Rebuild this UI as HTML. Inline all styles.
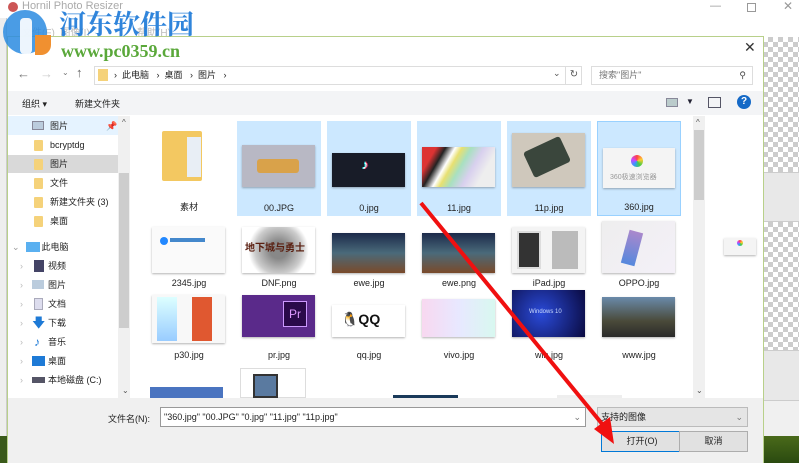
<!DOCTYPE html>
<html><head><meta charset="utf-8"><style>
*{margin:0;padding:0;box-sizing:border-box}
body{width:799px;height:463px;overflow:hidden;background:#fff;font-family:"Liberation Sans","Noto Sans CJK SC",sans-serif;font-size:9px;color:#222;position:relative}
.a{position:absolute}
.chk{background-color:#fff;background-image:linear-gradient(45deg,#ccc 25%,transparent 25%,transparent 75%,#ccc 75%),linear-gradient(45deg,#ccc 25%,transparent 25%,transparent 75%,#ccc 75%);background-size:10px 10px;background-position:0 0,5px 5px}
.nav{position:absolute;left:20px;font-size:9px;color:#222;height:18px;line-height:18px}
.fi{position:absolute;left:14px;top:4px;width:9px;height:11px;background:#f5d27a;border-radius:1px}
.it{position:absolute;width:84px;height:95px}
.it .lb{position:absolute;left:0;right:0;text-align:center;bottom:3px;font-size:9px;color:#222}
.th{position:absolute;box-shadow:0 1px 2px rgba(0,0,0,.3)}
</style></head><body>
<div class="a" style="left:0;top:0;width:799px;height:37px;background:#fff"></div>
<div class="a" style="left:22px;top:0;font-size:11px;color:#aaa">Hornil Photo Resizer</div>
<div class="a" style="left:22px;top:24px;font-size:10px;color:#bbb">文件(F)&nbsp;&nbsp;图像(I)&nbsp;&nbsp;&nbsp;&nbsp;&nbsp;&nbsp;&nbsp;&nbsp;&nbsp;&nbsp;&nbsp;&nbsp;&nbsp;&nbsp;&nbsp;&nbsp;&nbsp;帮助(H)</div>
<div class="a" style="left:8px;top:2px;width:10px;height:10px;border-radius:50%;background:#c55"></div>
<div class="a" style="left:710px;top:0;font-size:11px;color:#999">—</div>
<div class="a" style="left:747px;top:3px;width:9px;height:9px;border:1px solid #999"></div>
<div class="a" style="left:783px;top:-1px;font-size:12px;color:#999">✕</div>
<div class="a" style="left:0;top:18px;width:7px;height:445px;background:#eee;border-right:1px solid #ccc"></div>
<div class="a" style="left:0;top:436px;width:7px;height:27px;background:#3a5a1a"></div>
<div class="a chk" style="left:763px;top:37px;width:36px;height:135px"></div>
<div class="a" style="left:763px;top:172px;width:36px;height:50px;background:#e8e8e8;border-top:1px solid #ccc;border-bottom:1px solid #ccc"></div>
<div class="a chk" style="left:763px;top:222px;width:36px;height:128px"></div>
<div class="a" style="left:763px;top:350px;width:36px;height:50px;background:#e8e8e8;border-top:1px solid #ccc"></div>
<div class="a" style="left:763px;top:400px;width:36px;height:36px;background:#f0f0f0;border-top:1px solid #ccc"></div>
<div class="a" style="left:763px;top:436px;width:36px;height:27px;background:linear-gradient(#4a6a1a,#2a4a10)"></div>
<div class="a" style="left:7px;top:36px;width:757px;height:427px;background:#fff;border:1px solid #b8d08a"></div>
<div class="a" style="left:744px;top:39px;font-size:14px;color:#333">✕</div>
<div class="a" style="left:17px;top:66px;font-size:13px;color:#777">←</div>
<div class="a" style="left:40px;top:66px;font-size:13px;color:#ccc">→</div>
<div class="a" style="left:62px;top:68px;font-size:8px;color:#777">⌄</div>
<div class="a" style="left:76px;top:65px;font-size:13px;color:#666">↑</div>
<div class="a" style="left:94px;top:66px;width:488px;height:19px;border:1px solid #ddd"></div>
<div class="a" style="left:98px;top:69px;width:10px;height:12px;background:#f5d27a"></div>
<div class="a" style="left:114px;top:68px;font-size:9px;color:#222">›&nbsp;&nbsp;此电脑&nbsp;&nbsp;&nbsp;›&nbsp;&nbsp;桌面&nbsp;&nbsp;&nbsp;›&nbsp;&nbsp;图片&nbsp;&nbsp;&nbsp;›</div>
<div class="a" style="left:553px;top:68px;font-size:9px;color:#555">⌄</div>
<div class="a" style="left:565px;top:66px;width:17px;height:19px;border-left:1px solid #ddd;font-size:10px;color:#555;text-align:center;line-height:18px">↻</div>
<div class="a" style="left:591px;top:66px;width:162px;height:19px;border:1px solid #ddd;font-size:9px;color:#777;line-height:17px;padding-left:7px">搜索"图片"<span style="position:absolute;right:6px;color:#444">⚲</span></div>
<div class="a" style="left:8px;top:91px;width:755px;height:24px;background:#f3f4f6"></div>
<div class="a" style="left:22px;top:97px;font-size:9px">组织 ▾</div>
<div class="a" style="left:75px;top:97px;font-size:9px">新建文件夹</div>
<div class="a" style="left:666px;top:98px;width:12px;height:9px;background:#bcc;border:1px solid #889"></div>
<div class="a" style="left:686px;top:97px;font-size:8px;color:#223">▼</div>
<div class="a" style="left:708px;top:97px;width:13px;height:11px;border:1px solid #556"></div>
<div class="a" style="left:737px;top:95px;width:14px;height:14px;border-radius:50%;background:#1469c7;color:#fff;font-weight:bold;font-size:10px;text-align:center;line-height:14px">?</div>
<div class="a" style="left:8px;top:116px;width:110px;height:282px;background:#fff"></div>
<div class="a" style="left:8px;top:116px;width:110px;height:19px;background:#e5f3ff"></div>
<div class="a" style="left:8px;top:155px;width:110px;height:18px;background:#d9d9d9"></div>
<div class="a" style="left:118px;top:116px;width:12px;height:282px;background:#f0f0f0"></div>
<div class="a" style="left:119px;top:173px;width:10px;height:155px;background:#cdcdcd"></div>
<div class="a" style="left:122px;top:118px;font-size:8px;color:#555">^</div>
<div class="a" style="left:122px;top:386px;font-size:8px;color:#555">⌄</div>
<div class="nav" style="top:117px;left:32px"><span class="a" style="left:0;top:4px;width:12px;height:9px;background:#bcd;border:1px solid #889"></span><span style="margin-left:18px">图片</span><span style="margin-left:38px;color:#aaa">📌</span></div>
<div class="nav" style="top:136px;left:20px"><span class="fi"></span><span style="margin-left:30px">bcryptdg</span></div>
<div class="nav" style="top:155px;left:20px"><span class="fi"></span><span style="margin-left:30px">图片</span></div>
<div class="nav" style="top:174px;left:20px"><span class="fi"></span><span style="margin-left:30px">文件</span></div>
<div class="nav" style="top:193px;left:20px"><span class="fi"></span><span style="margin-left:30px">新建文件夹 (3)</span></div>
<div class="nav" style="top:212px;left:20px"><span class="fi"></span><span style="margin-left:30px">桌面</span></div>
<div class="nav" style="top:238px;left:12px"><span style="color:#999">⌄</span><span class="a" style="left:14px;top:4px;width:14px;height:10px;background:#5ab0f0"></span><span style="margin-left:22px">此电脑</span></div>
<div class="nav" style="top:257px;left:20px"><span style="color:#bbb">›</span><span class="a" style="left:14px;top:3px;width:10px;height:12px;background:#446"></span><span style="margin-left:25px">视频</span></div>
<div class="nav" style="top:276px;left:20px"><span style="color:#bbb">›</span><span class="a" style="left:12px;top:4px;width:12px;height:9px;background:#bcd"></span><span style="margin-left:25px">图片</span></div>
<div class="nav" style="top:295px;left:20px"><span style="color:#bbb">›</span><span class="a" style="left:14px;top:3px;width:9px;height:12px;background:#dde;border:1px solid #aab"></span><span style="margin-left:25px">文档</span></div>
<div class="nav" style="top:314px;left:20px"><span style="color:#bbb">›</span><span class="a" style="left:12px;top:0;color:#1e7ad6;font-size:13px">🡇</span><span style="margin-left:25px">下载</span></div>
<div class="nav" style="top:333px;left:20px"><span style="color:#bbb">›</span><span class="a" style="left:14px;top:0;color:#1e7ad6;font-size:12px">♪</span><span style="margin-left:25px">音乐</span></div>
<div class="nav" style="top:352px;left:20px"><span style="color:#bbb">›</span><span class="a" style="left:12px;top:4px;width:13px;height:10px;background:#1e7ad6"></span><span style="margin-left:25px">桌面</span></div>
<div class="nav" style="top:371px;left:20px"><span style="color:#bbb">›</span><span class="a" style="left:12px;top:6px;width:13px;height:6px;background:#556"></span><span style="margin-left:25px">本地磁盘 (C:)</span></div>
<div class="a" style="left:693px;top:116px;width:12px;height:282px;background:#f0f0f0"></div>
<div class="a" style="left:694px;top:130px;width:10px;height:70px;background:#cdcdcd"></div>
<div class="a" style="left:696px;top:118px;font-size:8px;color:#555">^</div>
<div class="a" style="left:696px;top:386px;font-size:8px;color:#555">⌄</div>
<!-- row1 -->
<div class="it" style="left:147px;top:121px"><div class="th" style="left:15px;top:10px;width:40px;height:50px;background:#f3c861;box-shadow:none;border-radius:2px"></div><div class="a" style="left:40px;top:16px;width:14px;height:40px;background:#e8eef5"></div><div class="lb">素材</div></div>
<div class="it" style="left:237px;top:121px;background:#cce8ff"><div class="th" style="left:5px;top:24px;width:73px;height:42px;background:#b8b8c4"></div><div class="a" style="left:20px;top:38px;width:42px;height:14px;background:#d9a24a;border-radius:3px"></div><div class="lb">00.JPG</div></div>
<div class="it" style="left:327px;top:121px;background:#cce8ff"><div class="th" style="left:5px;top:32px;width:73px;height:34px;background:#181c28"></div><div class="a" style="left:35px;top:36px;color:#fff;font-size:13px;text-shadow:-1px 0 #2ee,1px 0 #f25">♪</div><div class="lb">0.jpg</div></div>
<div class="it" style="left:417px;top:121px;background:#cce8ff"><div class="th" style="left:5px;top:26px;width:73px;height:40px;background:linear-gradient(120deg,#d33 15%,#222 25%,#fff 35%,#e8e070 42%,#a8e0c0 52%,#d8d0ee 65%,#eee 80%)"></div><div class="lb">11.jpg</div></div>
<div class="it" style="left:507px;top:121px;background:#cce8ff"><div class="th" style="left:5px;top:12px;width:73px;height:54px;background:#cfc8bc"></div><div class="a" style="left:20px;top:22px;width:40px;height:28px;background:#3a463c;transform:rotate(-25deg);border-radius:3px"></div><div class="lb">11p.jpg</div></div>
<div class="it" style="left:597px;top:121px;background:#cce8ff;border:1px solid #99d1ff"><div class="th" style="left:5px;top:26px;width:72px;height:40px;background:#f4f4f4"></div><div class="a" style="left:33px;top:33px;width:12px;height:12px;border-radius:50%;background:conic-gradient(#f44,#fc3,#4c4,#39f,#c4f,#f44)"></div><div class="a" style="left:12px;top:50px;font-size:7px;color:#999">360极速浏览器</div><div class="lb">360.jpg</div></div>
<!-- row2 -->
<div class="it" style="left:147px;top:215px"><div class="th" style="left:5px;top:12px;width:73px;height:46px;background:#fafafa"></div><div class="a" style="left:13px;top:22px;width:8px;height:8px;border-radius:50%;background:#28f"></div><div class="a" style="left:23px;top:23px;width:35px;height:4px;background:#48c"></div><div class="lb" style="bottom:auto;top:63px">2345.jpg</div></div>
<div class="it" style="left:237px;top:215px"><div class="th" style="left:5px;top:12px;width:73px;height:46px;background:radial-gradient(circle,#888 20%,#ccc 55%,#fff 70%)"></div><div class="a" style="left:8px;top:30px;width:66px;height:8px;color:#5a1f10;font-size:10px;line-height:8px;font-weight:bold">地下城与勇士</div><div class="lb" style="bottom:auto;top:63px">DNF.png</div></div>
<div class="it" style="left:327px;top:215px"><div class="th" style="left:5px;top:18px;width:73px;height:40px;background:linear-gradient(#1c2a4a,#4a6a7a 50%,#7a4a2a)"></div><div class="lb" style="bottom:auto;top:63px">ewe.jpg</div></div>
<div class="it" style="left:417px;top:215px"><div class="th" style="left:5px;top:18px;width:73px;height:40px;background:linear-gradient(#1c2a4a,#4a6a7a 50%,#7a4a2a)"></div><div class="lb" style="bottom:auto;top:63px">ewe.png</div></div>
<div class="it" style="left:507px;top:215px"><div class="th" style="left:5px;top:12px;width:73px;height:46px;background:#f4f4f4"></div><div class="a" style="left:10px;top:16px;width:24px;height:38px;background:#333;border:2px solid #ddd"></div><div class="a" style="left:45px;top:16px;width:26px;height:38px;background:#bbb"></div><div class="lb" style="bottom:auto;top:63px">iPad.jpg</div></div>
<div class="it" style="left:597px;top:215px"><div class="th" style="left:5px;top:6px;width:73px;height:52px;background:linear-gradient(135deg,#eee,#f4f0f8)"></div><div class="a" style="left:28px;top:16px;width:14px;height:34px;background:linear-gradient(#a8c,#58d);transform:rotate(15deg)"></div><div class="lb" style="bottom:auto;top:63px">OPPO.jpg</div></div>
<!-- row3 -->
<div class="it" style="left:147px;top:287px"><div class="th" style="left:5px;top:8px;width:73px;height:48px;background:#f8f8f8"></div><div class="a" style="left:10px;top:10px;width:20px;height:44px;background:linear-gradient(#dff,#9cf)"></div><div class="a" style="left:45px;top:10px;width:20px;height:44px;background:#e05830"></div><div class="lb" style="bottom:auto;top:63px">p30.jpg</div></div>
<div class="it" style="left:237px;top:287px"><div class="th" style="left:5px;top:8px;width:73px;height:42px;background:#5a2a8a"></div><div class="a" style="left:46px;top:14px;width:24px;height:26px;background:#2a0a4a;border:1px solid #c9f;color:#d9f;font-size:12px;text-align:center;line-height:24px">Pr</div><div class="lb" style="bottom:auto;top:63px">pr.jpg</div></div>
<div class="it" style="left:327px;top:287px"><div class="th" style="left:5px;top:18px;width:73px;height:32px;background:#fff"></div><div class="a" style="left:14px;top:24px;font-size:14px;color:#111;font-weight:bold">🐧QQ</div><div class="lb" style="bottom:auto;top:63px">qq.jpg</div></div>
<div class="it" style="left:417px;top:287px"><div class="th" style="left:5px;top:12px;width:73px;height:38px;background:linear-gradient(90deg,#f8d8f0,#e8e8ff,#d8f8f0)"></div><div class="lb" style="bottom:auto;top:63px">vivo.jpg</div></div>
<div class="it" style="left:507px;top:287px"><div class="th" style="left:5px;top:3px;width:73px;height:47px;background:radial-gradient(circle at 40% 50%,#2a4ad8,#0a0a40)"></div><div class="a" style="left:22px;top:22px;font-size:6px;color:#cdf">Windows 10</div><div class="lb" style="bottom:auto;top:63px">win.jpg</div></div>
<div class="it" style="left:597px;top:287px"><div class="th" style="left:5px;top:10px;width:73px;height:40px;background:linear-gradient(#6a8aaa,#4a4a3a 60%,#2a2a2a)"></div><div class="lb" style="bottom:auto;top:63px">www.jpg</div></div>
<div class="a" style="left:150px;top:387px;width:73px;height:11px;background:#4a74c0"></div>
<div class="a" style="left:240px;top:368px;width:66px;height:30px;background:#fff;border:1px solid #ddd"></div>
<div class="a" style="left:253px;top:374px;width:25px;height:24px;background:#5a7aa0;border:2px solid #333"></div>
<div class="a" style="left:393px;top:395px;width:65px;height:3px;background:#1a3a5a"></div>
<div class="a" style="left:557px;top:395px;width:65px;height:3px;background:#eee"></div>
<!-- bottom -->
<div class="a" style="left:8px;top:398px;width:755px;height:65px;background:#f0f0f0"></div>
<div class="a" style="left:108px;top:412px;font-size:9px">文件名(N):</div>
<div class="a" style="left:160px;top:407px;width:426px;height:20px;background:#fff;border:1px solid #999;font-size:9px;line-height:18px;padding-left:3px">"360.jpg" "00.JPG" "0.jpg" "11.jpg" "11p.jpg"<span style="position:absolute;right:4px;color:#777">⌄</span></div>
<div class="a" style="left:597px;top:407px;width:151px;height:20px;background:#e5e5e5;border:1px solid #bbb;font-size:9px;line-height:18px;padding-left:3px">支持的图像<span style="position:absolute;right:4px;color:#777">⌄</span></div>
<div class="a" style="left:601px;top:431px;width:82px;height:21px;background:#e1e1e1;border:1px solid #0078d7;font-size:9px;text-align:center;line-height:19px">打开(O)</div>
<div class="a" style="left:679px;top:431px;width:69px;height:21px;background:#e1e1e1;border:1px solid #adadad;font-size:9px;text-align:center;line-height:19px">取消</div>
<div class="a" style="left:724px;top:238px;width:32px;height:17px;background:#f4f4f4;box-shadow:0 1px 2px rgba(0,0,0,.3)"></div>
<div class="a" style="left:737px;top:240px;width:6px;height:6px;border-radius:50%;background:conic-gradient(#f44,#fc3,#4c4,#39f,#c4f,#f44)"></div>
<!-- watermark -->
<div class="a" style="left:3px;top:10px;width:44px;height:44px;border-radius:50%;background:#2a8be0;opacity:.85"></div>
<div class="a" style="left:20px;top:18px;width:12px;height:36px;background:#fff;border-radius:4px;opacity:.9"></div>
<div class="a" style="left:35px;top:35px;width:16px;height:20px;background:#f09030;border-radius:0 0 10px 0"></div>
<div class="a" style="left:59px;top:5px;font-size:27px;font-weight:bold;color:#1a78d8;font-family:'Noto Serif CJK SC','Noto Sans CJK SC',serif;line-height:36px;opacity:.9">河东软件园</div>
<div class="a" style="left:61px;top:41px;font-size:18px;font-weight:bold;color:#5aa83a;font-family:'Liberation Serif',serif">www.pc0359.cn</div>
<svg class="a" style="left:0;top:0" width="799" height="463"><line x1="421" y1="203" x2="603" y2="425" stroke="#f01010" stroke-width="4"/><polygon points="614,444 594,429 610,417" fill="#f01010"/></svg>
</body></html>
